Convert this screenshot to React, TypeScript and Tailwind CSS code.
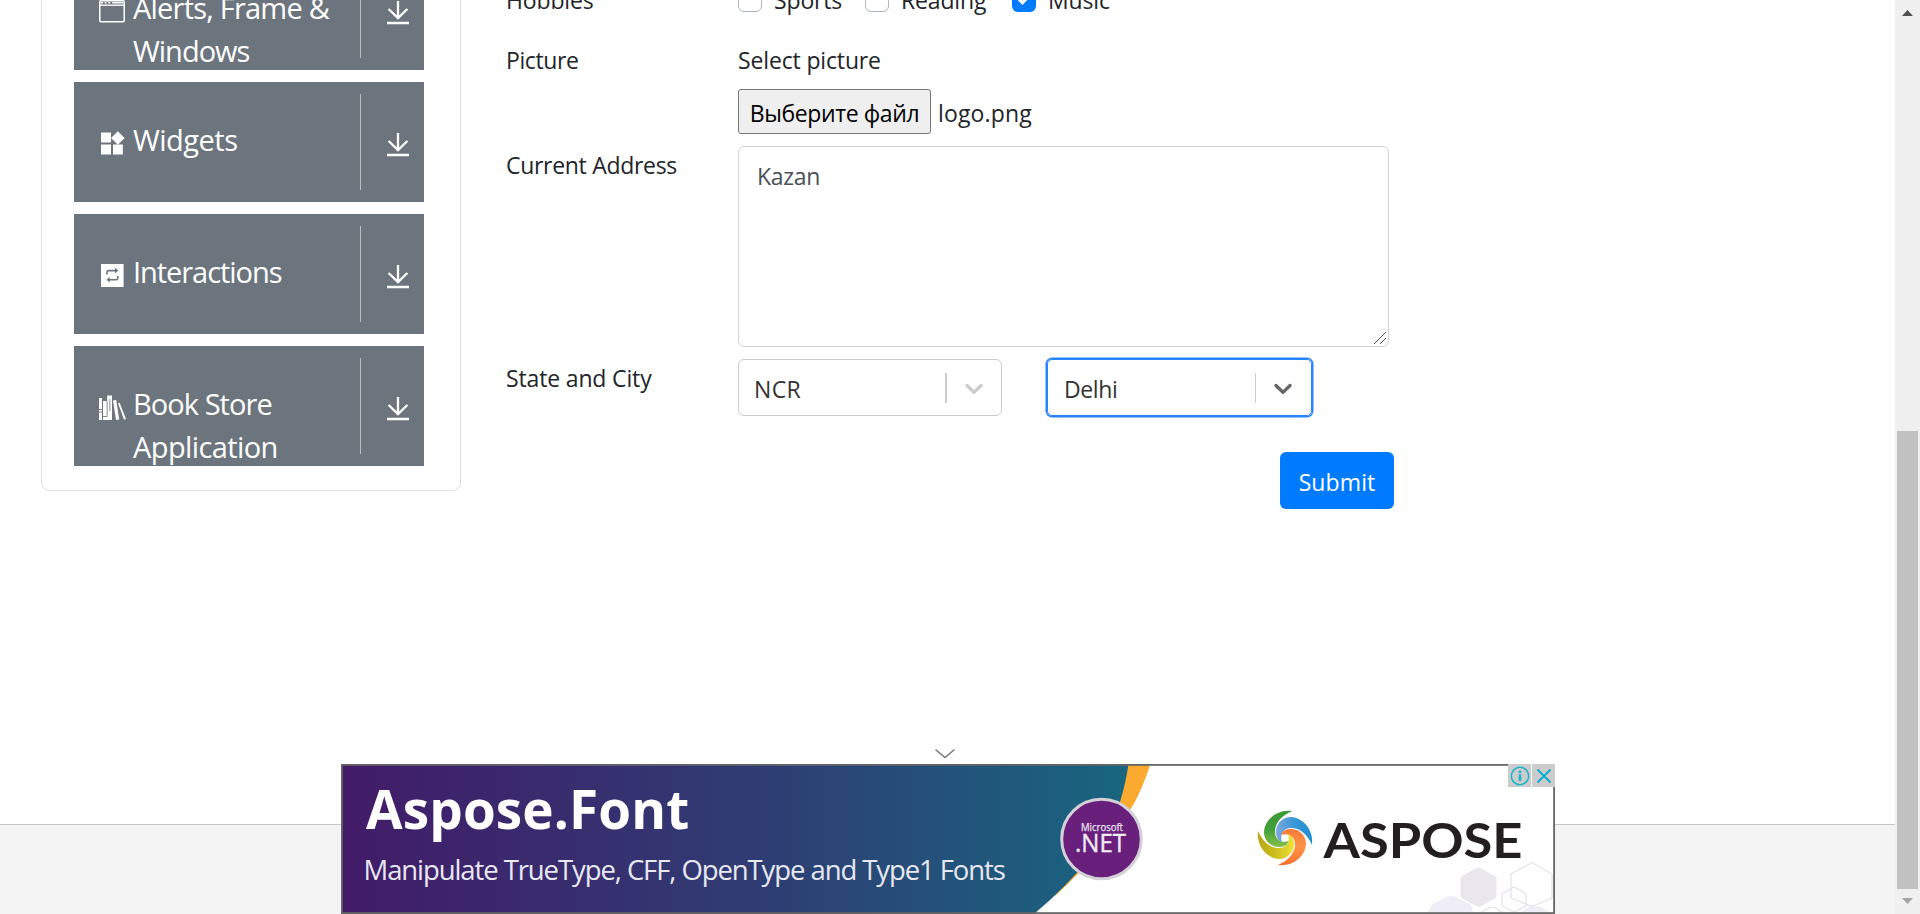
import React from "react";

const sans = "font-['Open_Sans','Noto_Sans',sans-serif]";

const WindowIcon = () => (
  <svg className="mt-[1px] block" width="26" height="23" viewBox="0 0 26 23" fill="none" stroke="#fff">
    <rect x="0.8" y="0.8" width="24.4" height="21" rx="1" strokeWidth="1.5" />
    <path d="M1 5.2H25" strokeWidth="1.4" />
    <path d="M2 2.8H24" strokeWidth="1.6" strokeDasharray="2 1.6 2 1.6 2 2 12" />
  </svg>
);

const WidgetsIcon = () => (
  <svg className="block" width="26" height="25" viewBox="0 0 26 25" fill="#fff">
    <rect x="2" y="1.5" width="10" height="10" />
    <rect x="2" y="13.5" width="10" height="10" />
    <rect x="14" y="13.5" width="9.8" height="10" />
    <path d="M18.8 0.3l6.8 6.7-6.8 6.7-6.7-6.7z" />
  </svg>
);

const InteractionsIcon = () => (
  <svg className="block" width="26" height="25" viewBox="0 0 26 25">
    <path fill="#fff" d="M2 1h22.6v23H2z" />
    <g fill="none" stroke="#6c757d" strokeWidth="1.6">
      <path d="M8 11.5V9.2Q8 7.6 9.6 7.6H17" />
      <path d="M18.8 13V15.2Q18.8 16.8 17.2 16.8H10" />
    </g>
    <path fill="#6c757d" d="M16 4.8l3.4 2.8-3.4 2.8zM10.8 14l-3.4 2.8 3.4 2.8z" />
  </svg>
);

const BooksIcon = () => (
  <svg className="block" width="27" height="26" viewBox="0 0 27 26">
    <path fill="#fff" d="M0 3h3v22H0zM4 6h4.4v19H4zM8.2 0.5h4.8v24.5H8.2zM14 5.5l3.2-.5 3 19.6-3.2.4z" />
    <path fill="#fff" d="M19 8.3l1.6-.6L27 24l-1.9.8z" />
    <path stroke="#6c757d" strokeWidth="0.9" d="M0 14.5h3M0 17h3M4 21.5h4.4" />
    <path stroke="#aab0b5" strokeWidth="1.4" d="M10.8 4v12M8.2 6v15" />
  </svg>
);

const DownloadIcon = () => (
  <svg width="24" height="26" viewBox="0 0 24 26" fill="none" stroke="#fff" strokeWidth="2.3">
    <path d="M12 1v17M2.6 9l9.4 9.1L21.4 9M1 23h22" />
  </svg>
);

const items = [
  { icon: <WindowIcon />, lines: ["Alerts, Frame &", "Windows"], track: ["tracking-[-0.78px]", "tracking-[-1px]"] },
  { icon: <WidgetsIcon />, lines: ["Widgets"], track: ["tracking-[-0.5px]"] },
  { icon: <InteractionsIcon />, lines: ["Interactions"], track: ["tracking-[-1.05px]"] },
  { icon: <BooksIcon />, lines: ["Book Store", "Application"], track: ["tracking-[-0.95px]", "tracking-[-0.6px]"] },
];

const Sidebar = () => (
  <aside className="-mt-[60px] ml-[41px] h-[551px] w-[420px] shrink-0 rounded-[8px] border border-[#dfdfdf] px-8 pt-[9px]">
    <ul className="flex flex-col gap-3">
      {items.map((it) => (
        <li key={it.lines[0]} className="flex h-[120px] w-[350px] overflow-hidden bg-[#6c757d] text-white">
          <div className="ml-[25px] w-[34px] shrink-0 pt-[49px]">{it.icon}</div>
          <div className="w-[227px] shrink-0 whitespace-nowrap pt-[36px] text-[29px] leading-[43px]">
            {it.lines.map((l, i) => (
              <div key={l} className={it.track[i]}>{l}</div>
            ))}
          </div>
          <div className="mt-3 h-24 w-px bg-[#b9bbbd]" />
          <div className="ml-[25px] pt-[50px]"><DownloadIcon /></div>
        </li>
      ))}
    </ul>
  </aside>
);

const Check = ({ label, on, w }: { label: string; on?: boolean; w: string }) => (
  <label className={`flex items-center ${w}`}>
    {on ? (
      <span className="flex h-6 w-6 items-center justify-center rounded-[6px] bg-[#007bff]">
        <svg width="12" height="12" viewBox="0 0 8 8"><path fill="#fff" d="M6.564.75l-3.59 3.612-1.538-1.55L0 4.26l2.974 2.99L8 2.193z" /></svg>
      </span>
    ) : (
      <span className="h-6 w-6 rounded-[6px] border border-[#adb5bd]" />
    )}
    <span className="ml-3 tracking-[-0.15px]">{label}</span>
  </label>
);

const Chevron = ({ color }: { color: string }) => (
  <svg width="30" height="30" viewBox="0 0 20 20" fill={color}>
    <path d="M4.516 7.548c0.436-0.446 1.043-0.481 1.576 0l3.908 3.747 3.908-3.747c0.533-0.481 1.141-0.446 1.574 0 0.436 0.445 0.408 1.197 0 1.615-0.406 0.418-4.695 4.502-4.695 4.502-0.217 0.223-0.502 0.335-0.787 0.335s-0.57-0.112-0.789-0.335c0 0-4.287-4.084-4.695-4.502s-0.436-1.17 0-1.615z" />
  </svg>
);

const Form = () => (
  <main className="ml-[45px] w-[888px] shrink-0 text-[23px] leading-[36px] text-[#212529]">
    <div className="-mt-[18px] flex h-[60px] items-start">
      <div className="w-[232px] tracking-[-0.15px]">Hobbies</div>
      <div className="flex">
        <Check label="Sports" w="w-[127px]" />
        <Check label="Reading" w="w-[147px]" />
        <Check label="Music" on w="w-[120px]" />
      </div>
    </div>
    <div className="flex h-[104px] items-start">
      <div className="w-[232px] tracking-[-0.4px]">Picture</div>
      <div>
        <div className="tracking-[-0.15px]">Select picture</div>
        <div className="mt-[11px] flex items-center">
          <button className="h-[45px] w-[193px] whitespace-nowrap rounded-[3px] border border-[#767676] bg-[#efefef] pt-[3px] text-center text-black tracking-[-0.4px]">Выберите файл</button>
          <span className="ml-[7px] pt-[3px] tracking-[0.15px]">logo.png</span>
        </div>
      </div>
    </div>
    <div className="flex h-[213px] items-start">
      <div className="w-[232px] pt-px tracking-[-0.3px]">Current Address</div>
      <div className="relative h-[201px] w-[651px]">
        <textarea readOnly defaultValue="Kazan" className="h-[201px] w-[651px] resize-none rounded-[6px] border border-[#ced4da] bg-white px-[18px] py-[11px] tracking-[-0.3px] text-[#495057] outline-none" />
        <svg className="absolute bottom-[2px] right-[2px]" width="14" height="14" viewBox="0 0 14 14" stroke="#555" strokeWidth="1"><path d="M1 13L13 1M7 13L13 7" /></svg>
      </div>
    </div>
    <div className="flex h-[93px] items-start">
      <div className="w-[232px] pt-px tracking-[-0.15px]">State and City</div>
      <div className="flex h-[57px] w-[264px] items-center rounded-[6px] border border-[#ccc] text-[#333]">
        <span className="ml-[15px] w-[191px] pt-[2px] tracking-[0.4px]">NCR</span>
        <span className="h-[30px] w-[2px] bg-[#ccc]" />
        <span className="ml-[12px]"><Chevron color="#ccc" /></span>
      </div>
      <div className="ml-[45px] flex h-[57px] w-[265px] items-center rounded-[5px] border border-[#2684ff] text-[#333] shadow-[0_0_0_1.5px_#2684ff]">
        <span className="ml-[16px] w-[191px] pt-[2px] tracking-[-0.4px]">Delhi</span>
        <span className="h-[30px] w-px bg-[#ccc]" />
        <span className="ml-[12px]"><Chevron color="#666" /></span>
      </div>
    </div>
    <div className="flex justify-end">
      <button className="h-[57px] w-[114px] rounded-[6px] bg-[#007bff] pt-[3px] text-center tracking-[0.1px] text-white">Submit</button>
    </div>
  </main>
);

const Scrollbar = () => (
  <div className="flex h-[914px] w-[25px] shrink-0 flex-col items-center bg-[#f0f0f0]">
    <svg className="mt-[10px] shrink-0" width="11" height="6" viewBox="0 0 11 6"><path fill="#505050" d="M5.5 0L11 6H0z" /></svg>
    <div className="mt-[415px] h-[458px] w-[21px] shrink-0 bg-[#c1c1c1]" />
    <svg className="mt-[9px] shrink-0" width="11" height="6" viewBox="0 0 11 6"><path fill="#a3a3a3" d="M5.5 6L11 0H0z" /></svg>
  </div>
);

const arm = "M7 -27C-8 -29 -20.500 -18 -21 -6C-21 3 -14 9 -6 9C-1 9 2 7.500 4 3C-3 5.500 -10 2 -10 -6C-10 -15 -4 -22 7 -27z";

const BannerArt = () => (
  <svg className="absolute inset-0" width="1214" height="150" viewBox="341 764 1214 150">
    <defs>
      <linearGradient id="bg" gradientUnits="userSpaceOnUse" x1="343" y1="0" x2="1128" y2="0">
        <stop offset="0" stopColor="#421b69" />
        <stop offset="0.52" stopColor="#2f3c73" />
        <stop offset="1" stopColor="#186680" />
      </linearGradient>
      <linearGradient id="gr" x1="0" y1="0" x2="0" y2="1"><stop offset="0" stopColor="#3c9a35" /><stop offset=".5" stopColor="#3f9f38" /><stop offset="1" stopColor="#86c04a" /></linearGradient>
      <linearGradient id="bl" x1="0" y1="0" x2="0" y2="1"><stop offset="0" stopColor="#1e8fd0" /><stop offset=".5" stopColor="#3a97d8" /><stop offset="1" stopColor="#7fa9dc" /></linearGradient>
      <linearGradient id="or" x1="0" y1="0" x2="0" y2="1"><stop offset="0" stopColor="#f8702c" /><stop offset=".5" stopColor="#ff9345" /><stop offset="1" stopColor="#f47a3c" /></linearGradient>
      <linearGradient id="ye" x1="0" y1="0" x2="0" y2="1"><stop offset="0" stopColor="#b9a614" /><stop offset=".5" stopColor="#cfbf1c" /><stop offset="1" stopColor="#efe23a" /></linearGradient>
    </defs>
    <path fill="#fff" d="M341 764h1214v150H341z" />
    <path fill="#fba92f" d="M1120 764H1150.5Q1140 795 1130 810Q1105 850 1055 896L1050 890z" />
    <path fill="url(#bg)" d="M341 764H1128.5Q1126 782 1120 802Q1103 856 1034 914H341z" />
    <g stroke="#e4e1ec" strokeWidth="1.2" fill="none" strokeLinejoin="round">
      <path fill="#e9e6ee" stroke="#e9e6ee" strokeWidth="5" d="M1478.500 870l15.500 8.500v17.500l-15.500 8.500l-15.500-8.500v-17.500z" />
      <path fill="#efedf6" stroke="none" d="M1428 914Q1429 907 1433 904L1447 896.500Q1451 895 1455 896.500L1470 904Q1473 907 1473 914zM1518 914L1530 906.500H1540L1553 914z" />
      <path d="M1532 862.500l20 11.500v24l-20 8.500l-21-8.500v-24z" />
      <path d="M1514 887l12 6.500v12.500l-12 6l-12-6v-12.500z" />
      <path d="M1478 914l12-6.500h5l10 6.500" />
    </g>
    <circle cx="1101.500" cy="839" r="39.800" fill="#68207c" stroke="#d3d0d8" strokeWidth="3" />
    <text x="1081" y="830.500" textLength="42" lengthAdjust="spacingAndGlyphs" fontFamily="Open Sans" fontSize="10.500" fill="#eee3f2" stroke="#eee3f2" strokeWidth=".25">Microsoft</text>
    <text x="1075" y="851.500" textLength="51" lengthAdjust="spacingAndGlyphs" fontFamily="Open Sans" fontSize="26" fill="#f3ebf5" stroke="#f3ebf5" strokeWidth=".4">.NET</text>
    <g transform="translate(1285 838)">
      <path fill="url(#gr)" d={arm} />
      <path fill="url(#bl)" transform="rotate(90)" d={arm} />
      <path fill="url(#or)" transform="rotate(180)" d={arm} />
      <path fill="url(#ye)" transform="rotate(270)" d={arm} />
    </g>
    <text x="1323.500" y="857.500" textLength="199" lengthAdjust="spacingAndGlyphs" fontFamily="Lato" fontWeight="700" fontSize="47" fill="#231f20">ASPOSE</text>
    <rect x="341.900" y="764.900" width="1212.200" height="148.200" fill="none" stroke="#666" strokeWidth="1.800" />
  </svg>
);

const Banner = () => (
  <div className="absolute left-[341px] top-[748px] flex flex-col">
    <svg className="ml-[594px]" width="20" height="16" viewBox="0 0 20 16" fill="none" stroke="#777" strokeWidth="1.400"><path d="M0.500 1.500L10 9.500L19.500 1.500" /></svg>
    <div className="relative h-[150px] w-[1214px] overflow-hidden">
      <BannerArt />
      <div className="relative whitespace-nowrap text-white">
        <div className="ml-[25px] pt-[9px] text-[53px] font-bold leading-[72px] tracking-[0.15px]">Aspose.Font</div>
        <div className="ml-[22.5px] mt-[7px] text-[27.5px] leading-[36px] tracking-[-1.09px] text-[#e8e8f2]">Manipulate TrueType, CFF, OpenType and Type1 Fonts</div>
      </div>
      <div className="absolute right-0 top-0 flex gap-px bg-white">
        <span className="flex h-[23px] w-[23px] items-center justify-center bg-[#ccc]">
          <svg width="20" height="20" viewBox="0 0 20 20" fill="none" stroke="#17b4cf"><circle cx="10" cy="10" r="8.700" strokeWidth="1.500" /><path d="M10 8.300V15M10 4.800V7" strokeWidth="2.600" /></svg>
        </span>
        <span className="flex h-[23px] w-[23px] items-center justify-center bg-[#ccc]">
          <svg width="16" height="16" viewBox="0 0 16 16" stroke="#00aecd" strokeWidth="1.800"><path d="M1.500 1.500L14.500 14.500M14.500 1.500L1.500 14.500" /></svg>
        </span>
      </div>
    </div>
  </div>
);

export default function App() {
  return (
    <div className={`relative flex h-[914px] w-[1920px] overflow-hidden bg-white ${sans}`}>
      <div className="flex h-[914px] w-[1895px] flex-col">
        <div className="flex h-[824px] shrink-0 items-start">
          <Sidebar />
          <Form />
        </div>
        <footer className="h-[90px] border-t border-[#c8c8c8] bg-[#f4f4f4]" />
      </div>
      <Scrollbar />
      <Banner />
    </div>
  );
}
